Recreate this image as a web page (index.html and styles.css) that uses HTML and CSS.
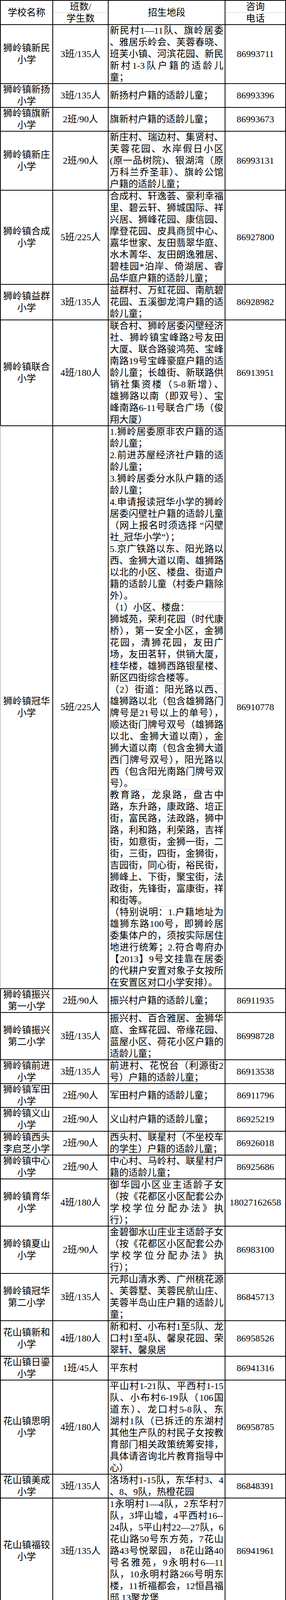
FILE: index.html
```html
<!DOCTYPE html>
<html lang="zh-CN">
<head>
<meta charset="utf-8">
<title>招生地段</title>
<link rel="stylesheet" href="styles.css">
</head>
<body>
<div class="sheet">
  <div class="c n hd ha">学校名称</div>
  <div class="c k hd hb1">班数/</div>
  <div class="c d hd hc center">招生地段</div>
  <div class="c t hd hd1">咨询</div>
  <div class="c k hb2">学生数</div>
  <div class="c t hd2">电话</div>

  <div class="c n">狮岭镇新民<br>小学</div>
  <div class="c k">3班/135人</div>
  <div class="c d"><p>新民村1—11队、旗岭居委</p><p>、雅居乐岭会、芙蓉春晓、</p><p>班芙小镇、河滨花园、新民</p><p>新村1-3队户籍的适龄儿</p><p>童；</p></div>
  <div class="c t">86993711</div>

  <div class="c n">狮岭镇新扬<br>小学</div>
  <div class="c k">3班/135人</div>
  <div class="c d"><p>新扬村户籍的适龄儿童；</p></div>
  <div class="c t">86993396</div>

  <div class="c n">狮岭镇旗新<br>小学</div>
  <div class="c k">2班/90人</div>
  <div class="c d"><p>旗新村户籍的适龄儿童；</p></div>
  <div class="c t">86993673</div>

  <div class="c n">狮岭镇新庄<br>小学</div>
  <div class="c k">2班/90人</div>
  <div class="c d"><p>新庄村、瑞边村、集贤村、</p><p>芙蓉花园、水岸假日小区</p><p>(原一品树院)、银湖湾（原</p><p>万科兰乔圣菲）、旗岭公馆</p><p>户籍的适龄儿童；</p></div>
  <div class="c t">86993131</div>

  <div class="c n">狮岭镇合成<br>小学</div>
  <div class="c k">5班/225人</div>
  <div class="c d"><p>合成村、轩逸荟、豪利幸福</p><p>里、碧云轩、狮城国际、祥</p><p>兴居、狮峰花园、康信园、</p><p>摩登花园、皮具商贸中心、</p><p>嘉华世家、友田翡翠华庭、</p><p>水木菁华、友田朗逸雅居、</p><p>碧桂园*泊岸、倚湖居、睿</p><p>品华庭户籍的适龄儿童；</p></div>
  <div class="c t">86927800</div>

  <div class="c n">狮岭镇益群<br>小学</div>
  <div class="c k">3班/135人</div>
  <div class="c d"><p>益群村、万虹花园、南航碧</p><p>花园、五溪御龙湾户籍的适</p><p>龄儿童；</p></div>
  <div class="c t">86928982</div>

  <div class="c n">狮岭镇联合<br>小学</div>
  <div class="c k">4班/180人</div>
  <div class="c d"><p>联合村、狮岭居委闪壁经济</p><p>社、狮岭镇宝峰路2号友田</p><p>大厦、联合路骏鸿苑、宝峰</p><p>南路19号宝峰豪庭户籍的适</p><p>龄儿童；长雄街、新联路供</p><p>销社集资楼（5-8新增）、</p><p>雄狮路以南（即双号）、宝</p><p>峰南路6-11号联合广场（俊</p><p>翔大厦）</p></div>
  <div class="c t">86913951</div>

  <div class="c n gl">狮岭镇冠华<br>小学</div>
  <div class="c k">5班/225人</div>
  <div class="c d">
    <div class="sub"><p>1.狮岭居委原非农户籍的适</p><p>龄儿童；</p></div>
    <div class="sub"><p>2.前进苏屋经济社户籍的适</p><p>龄儿童；</p></div>
    <div class="sub"><p>3.狮岭居委分水队户籍的适</p><p>龄儿童；</p></div>
    <div class="sub"><p>4.申请报读冠华小学的狮岭</p><p>居委闪壁社户籍的适龄儿童</p><p>（网上报名时须选择 “闪壁</p><p>社_冠华小学”）；</p></div>
    <div class="sub"><p>5.京广铁路以东、阳光路以</p><p>西、金狮大道以南、雄狮路</p><p>以北的小区、楼盘、街道户</p><p>籍的适龄儿童（村委户籍除</p><p>外）。</p></div>
    <div class="sub"><p>（1）小区、楼盘：</p></div>
    <div class="sub"><p>狮城苑，荣利花园（时代康</p><p>桥），第一安全小区，金狮</p><p>花园，清狮花园，友田广</p><p>场，友田茗轩，供销大厦，</p><p>桂华楼，雄狮西路银星楼、</p><p>新区四街综合楼等。</p></div>
    <div class="sub"><p>（2）街道：阳光路以西、</p><p>雄狮路以北（包含雄狮路门</p><p>牌号是21号以上的单号），</p><p>顺达街门牌号双号（雄狮路</p><p>以北、金狮大道以南），金</p><p>狮大道以南（包含金狮大道</p><p>西门牌号双号），阳光路以</p><p>西（包含阳光南路门牌号双</p><p>号）。</p></div>
    <div class="sub"><p>教育路，龙泉路，盘古中</p><p>路，东升路，康政路、培正</p><p>街，富民路，法政路，狮中</p><p>路，利和路，利荣路，吉祥</p><p>街，如意街，金狮一街，二</p><p>街，三街，四街，金狮街，</p><p>吉园街，同心街，裕民街，</p><p>狮峰上、下街，聚宝街，法</p><p>政街，先锋街，富康街，祥</p><p>和街等。</p></div>
    <div class="sub"><p>（特别说明：1.户籍地址为</p><p>雄狮东路100号，即狮岭居</p><p>委集体户的，须按实际居住</p><p>地进行统筹；2.符合粤府办</p><p>【2013】9号文挂靠在居委</p><p>的代耕户安置对象子女按所</p><p>在安置区对口小学安排）。</p></div>
  </div>
  <div class="c t">86910778</div>

  <div class="c n">狮岭镇振兴<br>第一小学</div>
  <div class="c k">2班/90人</div>
  <div class="c d"><p>振兴村户籍的适龄儿童；</p></div>
  <div class="c t">86911935</div>

  <div class="c n">狮岭镇振兴<br>第二小学</div>
  <div class="c k">3班/135人</div>
  <div class="c d"><p>振兴村、百合雅居、金狮华</p><p>庭、金辉花园、帝缘花园、</p><p>蓝屋小区、荷花小区户籍的</p><p>适龄儿童；</p></div>
  <div class="c t">86998728</div>

  <div class="c n">狮岭镇前进<br>小学</div>
  <div class="c k">3班/135人</div>
  <div class="c d"><p>前进村、花悦台（利源街2</p><p>号）户籍的适龄儿童；</p></div>
  <div class="c t">86913538</div>

  <div class="c n">狮岭镇军田<br>小学</div>
  <div class="c k">2班/90人</div>
  <div class="c d"><p>军田村户籍的适龄儿童；</p></div>
  <div class="c t">86911796</div>

  <div class="c n">狮岭镇义山<br>小学</div>
  <div class="c k">2班/90人</div>
  <div class="c d"><p>义山村户籍的适龄儿童；</p></div>
  <div class="c t">86925219</div>

  <div class="c n">狮岭镇西头<br>李启芝小学</div>
  <div class="c k">2班/90人</div>
  <div class="c d"><p>西头村、联星村（不坐校车</p><p>的学生）户籍的适龄儿童；</p></div>
  <div class="c t">86926018</div>

  <div class="c n">狮岭镇中心<br>小学</div>
  <div class="c k">2班/90人</div>
  <div class="c d"><p>中心村、马岭村、联星村户</p><p>籍的适龄儿童；</p></div>
  <div class="c t">86925686</div>

  <div class="c n">狮岭镇育华<br>小学</div>
  <div class="c k">4班/180人</div>
  <div class="c d"><p>御华园小区业主适龄子女</p><p>（按《花都区小区配套公办</p><p>学校学位分配办法》执</p><p>行）；</p></div>
  <div class="c t">18027162658</div>

  <div class="c n">狮岭镇夏山<br>小学</div>
  <div class="c k">2班/90人</div>
  <div class="c d"><p>金碧御水山庄业主适龄子女</p><p>（按《花都区小区配套公办</p><p>学校学位分配办法》执</p><p>行）；</p></div>
  <div class="c t">86983100</div>

  <div class="c n">狮岭镇冠华<br>第二小学</div>
  <div class="c k">3班/135人</div>
  <div class="c d"><p>元邦山清水秀、广州桃花源</p><p>、芙蓉墅、芙蓉民航山庄、</p><p>芙蓉半岛山庄户籍的适龄儿</p><p>童；</p></div>
  <div class="c t">86845713</div>

  <div class="c n">花山镇新和<br>小学</div>
  <div class="c k">4班/180人</div>
  <div class="c d"><p>新和村、小布村1至5队、龙</p><p>口村1至4队、馨泉花园、荣</p><p>翠轩、馨泉居</p></div>
  <div class="c t">86958526</div>

  <div class="c n">花山镇日鎏<br>小学</div>
  <div class="c k">1班/45人</div>
  <div class="c d"><p>平东村</p></div>
  <div class="c t">86941316</div>

  <div class="c n">花山镇思明<br>小学</div>
  <div class="c k">4班/180人</div>
  <div class="c d"><p>平山村1-21队、平西村1-15</p><p>队、小布村6-19队（106国</p><p>道东）、龙口村5-8队、东</p><p>湖村1队（已拆迁的东湖村</p><p>其他生产队的村民子女按教</p><p>育部门相关政策统筹安排，</p><p>具体请咨询北片教育指导中</p><p>心）</p></div>
  <div class="c t">86958785</div>

  <div class="c n">花山镇美成<br>小学</div>
  <div class="c k">3班/135人</div>
  <div class="c d"><p>洛场村1-15队，东华村3、4</p><p>、8、9队，热橙花园</p></div>
  <div class="c t">86848391</div>

  <div class="c n">花山镇福铰<br>小学</div>
  <div class="c k">3班/135人</div>
  <div class="c d"><p>1永明村1—4队，2东华村7</p><p>队，3坪山墟，4平西村16--</p><p>24队，5平山村22—27队，6</p><p>花山路50号东方苑，7花山</p><p>路43号悦翠园， 8花山路40</p><p>号名雅苑，9永明村6—11</p><p>队，10永明村路266号明东</p><p>楼，11祈福都会，12恒昌福</p><p>邸,13聚龙堡</p></div>
  <div class="c t">86941961</div>

  <div class="c n">花山镇悦贤<br>小学</div>
  <div class="c k">4班/180人</div>
  <div class="c d"><p>两龙居委（房产位于悦贤小</p><p>学以东；花山中学以南；</p><p>106国道以西；流溪河以</p><p>北）、南村、永明村5队、</p><p>东华村1、2、5、6队、两龙</p><p>村1、2、3、4、5、6、15队</p><p>、铁山村9、20队</p></div>
  <div class="c t">86848389</div>

  <div class="c n">花山镇养正<br>小学</div>
  <div class="c k">3班/135人</div>
  <div class="c d"><p>东方村；两龙村7—14队；</p><p>16—17队；永乐村7—10</p><p>队；布岗村13—14队；合裕</p><p>华亭（两龙居委户籍）</p></div>
  <div class="c t">86941930</div>

  <div class="c n">花山镇铁山<br>小学</div>
  <div class="c k">2班/90人</div>
  <div class="c d"><p>铁山村</p></div>
  <div class="c t">37700928</div>

  <div class="c n">花山镇文坚<br>小学</div>
  <div class="c k">2班/90人</div>
  <div class="c d"><p>红群村</p></div>
  <div class="c t">86941618</div>

  <div class="c n">花山镇和郁<br>小学</div>
  <div class="c k">3班/135人</div>
  <div class="c d"><p>和郁村、五星村、时代紫林</p></div>
  <div class="c t">86951573</div>

  <div class="c n">花山镇儒林<br>小学</div>
  <div class="c k">2班/90人</div>
  <div class="c d"><p>儒林、源和村1至3队、紫西</p><p>村</p></div>
  <div class="c t">37701780</div>

  <div class="c n">花山镇邝维<br>煜小学</div>
  <div class="c k">2班/90人</div>
  <div class="c d"><p>布岗村1—3队，花城村，狮</p><p>民村</p></div>
  <div class="c t">86954769</div>

  <div class="c n">花山镇花城<br>小学</div>
  <div class="c k">4班/180人</div>
  <div class="c d"><p>源和村 城西村 福源村 &nbsp;永</p><p>乐村（1-6队） 布岗村（4-</p><p>12队）</p></div>
  <div class="c t">86954288</div>

  <div class="c n">梯面镇梯面<br>小学</div>
  <div class="c k">3班/135人</div>
  <div class="c d"><p>西坑村、横坑村、红山村、</p><p>塘岭村、五联村、联民村、</p><p>联丰村和梯面居委属招生范</p><p>围</p></div>
  <div class="c t">86851125</div>

  <div class="c n">梯面镇民安<br>小学</div>
  <div class="c k">1班/45人</div>
  <div class="c d"><p>民安村1-9队适龄儿童</p></div>
  <div class="c t">86956413</div>

  <div class="c n">棠澍小学附<br>属云梯小学</div>
  <div class="c k">1班/45人</div>
  <div class="c d"><p>梯面镇颐和山庄</p></div>
  <div class="c t">86788823</div>

  <div class="c n">狮岭中学</div>
  <div class="c k">14班/700人</div>
  <div class="c d"><p>1、广州市户籍，前进小学</p><p>、振兴一小、振兴二小毕业</p><p>生；2、广州市户籍的冠华</p><p>小学、冠华第二小学、夏山</p><p>小学毕业生可选择直升狮峰</p><p>中学、狮峰中学分校区或狮</p><p>岭中学。</p></div>
  <div class="c t">86931843</div>

  <div class="c n">狮岭镇狮峰<br>初级中学</div>
  <div class="c k">12班/600人</div>
  <div class="c d"><p>1、广州市户籍，联合、合</p><p>成、益群小学毕业生；2、</p><p>广州市户籍的冠华小学、冠</p><p>华第二小学、夏山小学毕业</p><p>生可选择直升狮峰中学、狮</p><p>峰中学分校区或狮岭中学；</p><p>3、广州市户籍的育华小学</p><p>毕业生可选择直升狮峰中学</p><p>或狮峰中学分校区。</p></div>
  <div class="c t">86918407</div>

  <div class="c n">狮岭镇冯村<br>初级中学</div>
  <div class="c k">7班/350人</div>
  <div class="c d"><p>广州市户籍，军田、中心、</p><p>义山、西头小学毕业生</p></div>
  <div class="c t">86845307</div>

  <div class="c n">狮岭镇芙蓉<br>初级中学</div>
  <div class="c k">8班/400人</div>
  <div class="c d"><p>1、广州市户籍，新民、新</p><p>扬、旗新小学毕业生；2、</p><p>广州市户籍的新庄小学毕业</p><p>生可选择直升芙蓉中学或狮</p><p>峰中学分校区。</p></div>
  <div class="c t">86854316</div>

  <div class="c n">狮岭镇狮峰<br>初级中学分<br>校区</div>
  <div class="c k">5班/250人</div>
  <div class="c d"><p>1、广州市户籍的新庄小学</p><p>毕业生可选择直升芙蓉中学</p><p>或狮峰中学分校区；2、广</p><p>州市户籍的冠华小学、冠华</p><p>第二小学、夏山小学毕业生</p><p>可选择直升狮峰中学、狮峰</p><p>中学分校区或狮岭中学；3</p><p>、广州市户籍的育华小学毕</p><p>业生可选择直升狮峰中学或</p><p>狮峰中学分校区。</p></div>
  <div class="c t">86918407</div>

  <div class="c n">花山镇花山<br>初级中学</div>
  <div class="c k">12班/600人</div>
  <div class="c d"><p>悦贤小学、文坚小学、和郁</p><p>小学、美成小学（户籍地流</p><p>溪河灌渠以北）、养正小学</p><p>、花城小学、福铰小学（户</p><p>籍地流溪河灌渠以北）、邝</p><p>维煜小学、儒林小学、铁山</p><p>小学广州市户籍毕业学生。</p></div>
  <div class="c t">86941923</div>

  <div class="c n">花山镇华侨<br>初级中学</div>
  <div class="c k">10班/500人</div>
  <div class="c d"><p>新和小学、思明小学、日鎏</p><p>小学、美成小学（户籍地流</p><p>溪河灌渠以南）、福铰小学</p><p>（户籍地流溪河灌渠以南）</p><p>广州市户籍毕业学生</p></div>
  <div class="c t">86958589</div>

  <div class="c n">梯面镇梯面<br>初级中学</div>
  <div class="c k">3班/150人</div>
  <div class="c d"><p>梯面小学、民安小学广州市</p><p>户籍毕业学生。</p></div>
  <div class="c t">86851535</div>
</div>
</body>
</html>
```

FILE: styles.css
```css
html, body {
  margin: 0;
  padding: 0;
  background: #fff;
}

body {
  font-family: "Liberation Serif", "Noto Sans CJK SC", serif;
  font-size: 24px;
  line-height: 30px;
  color: #000;
}

.sheet {
  display: grid;
  grid-template-columns: 136px 142px 299px 155px;
  width: 732px;
}

.c {
  box-sizing: border-box;
  min-width: 0;
  border-right: 2px solid #000;
  border-bottom: 2px solid #000;
  margin-bottom: -1px;
  display: flex;
  flex-direction: column;
  justify-content: center;
  text-align: center;
}

.n {
  border-left: 2px solid #000;
}

.gl {
  border-left-color: #c8c8c8;
}

.d {
  text-align: left;
}

.d p {
  margin: 0;
  padding: 0 3px;
  white-space: nowrap;
  text-align-last: justify;
}

.d p:last-child {
  text-align-last: auto;
}

.d.center {
  text-align: center;
}

.sub + .sub {
  box-shadow: inset 0 1px 0 #d4d4d4;
}

/* header */
.hd {
  border-top: 2px solid #000;
}

.ha {
  grid-column: 1;
  grid-row: 1 / 3;
}

.hb1 {
  grid-column: 2;
  grid-row: 1;
  border-bottom: 0;
  margin-bottom: 0;
}

.hc {
  grid-column: 3;
  grid-row: 1 / 3;
}

.hd1 {
  grid-column: 4;
  grid-row: 1;
  border-bottom: 0;
  margin-bottom: 0;
}

.hb2 {
  grid-column: 2;
  grid-row: 2;
  box-shadow: inset 0 1px 0 #d4d4d4;
}

.hd2 {
  grid-column: 4;
  grid-row: 2;
  box-shadow: inset 0 1px 0 #d4d4d4;
}
```
